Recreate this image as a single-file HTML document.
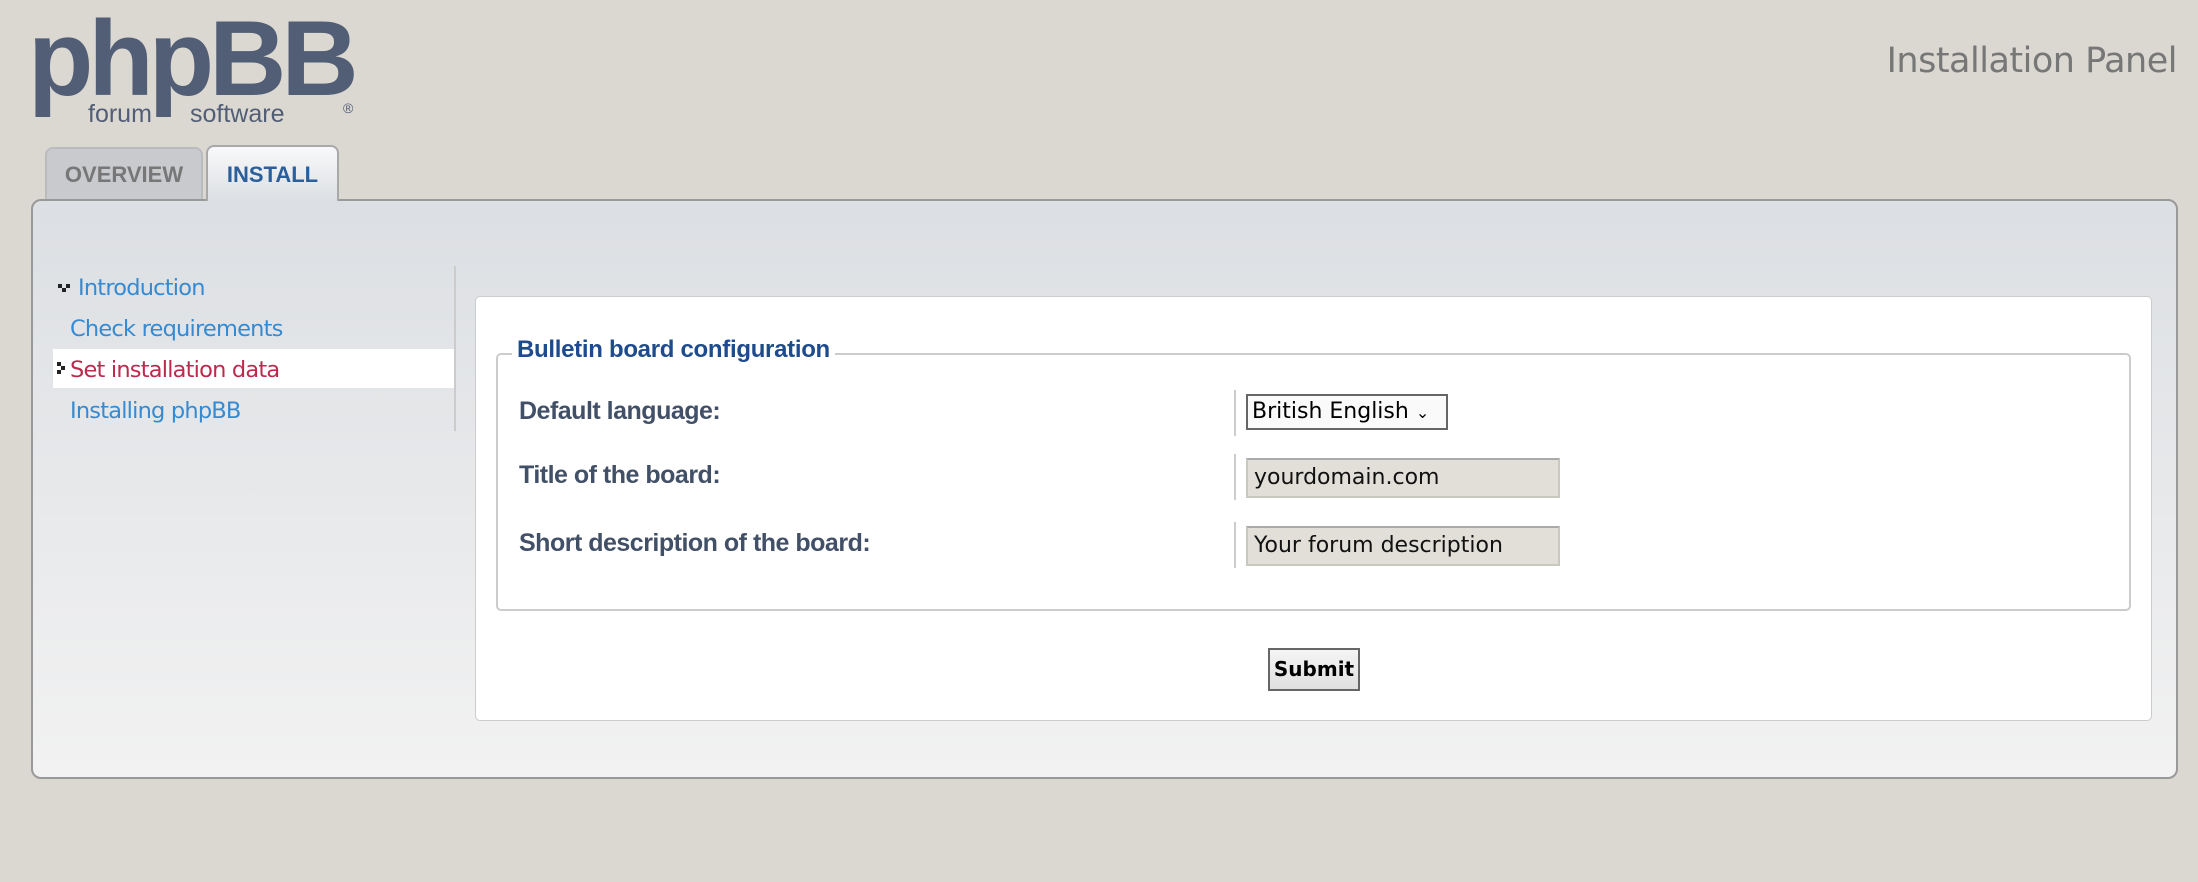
<!DOCTYPE html>
<html><head><meta charset="utf-8"><style>
*{box-sizing:border-box;margin:0;padding:0}
body{width:2198px;height:882px;background:#dbd8d2;font-family:"Liberation Sans",sans-serif;position:relative;overflow:hidden}
.abs{position:absolute}
#logo{left:28px;top:5px;font-size:107px;font-weight:bold;color:#525e75;letter-spacing:-5px;line-height:1}
#sub{left:88px;top:100px;font-size:25px;color:#525e75}
#sub2{left:190px;top:100px;font-size:25px;color:#525e75}
#reg{left:343px;top:100px;font-size:14px;color:#525e75}
#title{right:21px;top:41px;font-size:35px;color:#777;font-family:"DejaVu Sans",sans-serif;letter-spacing:-0.5px}
.tab{top:147px;height:53px;border:2px solid #b9bbbf;border-bottom:none;border-radius:8px 8px 0 0;font-weight:bold;font-size:22px;text-align:center;line-height:52px}
#t1{left:45px;width:158px;background:#c8cace;color:#777}
#t2{left:206px;width:133px;top:145px;height:56px;background:linear-gradient(#f8f9fa,#dcdfe3);color:#2a5f9b;border-color:#a9a9a9;z-index:2;line-height:56px}
#panel{left:31px;top:199px;width:2147px;height:580px;border:2px solid #999;border-radius:10px;background:linear-gradient(#dcdfe3,#f2f2f2)}
.mi{left:70px;font-size:22.5px;color:#368ad2;font-family:"DejaVu Sans",sans-serif;letter-spacing:-0.8px}
#act{left:53px;top:349px;width:401px;height:39px;background:#fff}
#div{left:454px;top:266px;width:2px;height:165px;background:#ccc}
#box{left:475px;top:296px;width:1677px;height:425px;background:#fff;border:1px solid #ccc;border-radius:5px}
#fs{left:496px;top:353px;width:1635px;height:258px;border:2px solid #ccc;border-radius:5px}
#lg{left:512px;top:336px;background:#fff;padding:0 5px;font-size:24px;font-weight:bold;color:#1e4b8e;letter-spacing:-0.3px}
.lb{left:519px;font-size:25px;font-weight:bold;color:#425067;letter-spacing:-0.5px}
.bar{left:1234px;width:2px;height:46px;background:#ccc}
.in{left:1246px;width:314px;height:40px;background:#e1dfd7;border:2px solid #c9c8bf;border-top-color:#aaa;font-family:"DejaVu Sans",sans-serif;font-size:22px;color:#111;padding-left:6px;line-height:36px}
#sel{left:1246px;top:394px;width:202px;height:36px;border:2px solid #666;background:#fafafa;font-family:"DejaVu Sans",sans-serif;font-size:22px;line-height:32px;padding-left:4px;color:#000}
#btn{left:1268px;top:648px;width:92px;height:43px;border:2px solid #666;background:linear-gradient(#f4f4f4,#e0e0e0);font-family:"DejaVu Sans",sans-serif;font-weight:bold;font-size:20px;text-align:center;line-height:39px}
.ic{width:4px;height:4px;background:#222}
</style></head><body>
<div class="abs" id="logo">phpBB</div>
<div class="abs" id="sub">forum</div>
<div class="abs" id="sub2">software</div>
<div class="abs" id="reg">®</div>
<div class="abs" id="title">Installation Panel</div>
<div class="abs tab" id="t1">OVERVIEW</div>
<div class="abs tab" id="t2">INSTALL</div>
<div class="abs" id="panel"></div>
<div class="abs" id="act"></div>
<div class="abs" id="div"></div>
<div class="abs ic" style="left:58px;top:284px"></div><div class="abs ic" style="left:66px;top:284px"></div><div class="abs ic" style="left:62px;top:288px"></div>
<div class="abs mi" style="left:78px;top:275px">Introduction</div>
<div class="abs mi" style="top:316px">Check requirements</div>
<div class="abs ic" style="left:57px;top:362px"></div><div class="abs ic" style="left:61px;top:366px"></div><div class="abs ic" style="left:57px;top:370px"></div>
<div class="abs mi" style="top:357px;color:#bc2a4d">Set installation data</div>
<div class="abs mi" style="top:398px">Installing phpBB</div>
<div class="abs" id="box"></div>
<div class="abs" id="fs"></div>
<div class="abs" id="lg">Bulletin board configuration</div>
<div class="abs lb" style="top:397px">Default language:</div>
<div class="abs lb" style="top:461px">Title of the board:</div>
<div class="abs lb" style="top:529px">Short description of the board:</div>
<div class="abs bar" style="top:390px"></div>
<div class="abs bar" style="top:454px"></div>
<div class="abs bar" style="top:522px"></div>
<div class="abs" id="sel">British English <span style="font-size:16px">&#8964;</span></div>
<div class="abs in" style="top:458px">yourdomain.com</div>
<div class="abs in" style="top:526px">Your forum description</div>
<div class="abs" id="btn">Submit</div>
</body></html>
